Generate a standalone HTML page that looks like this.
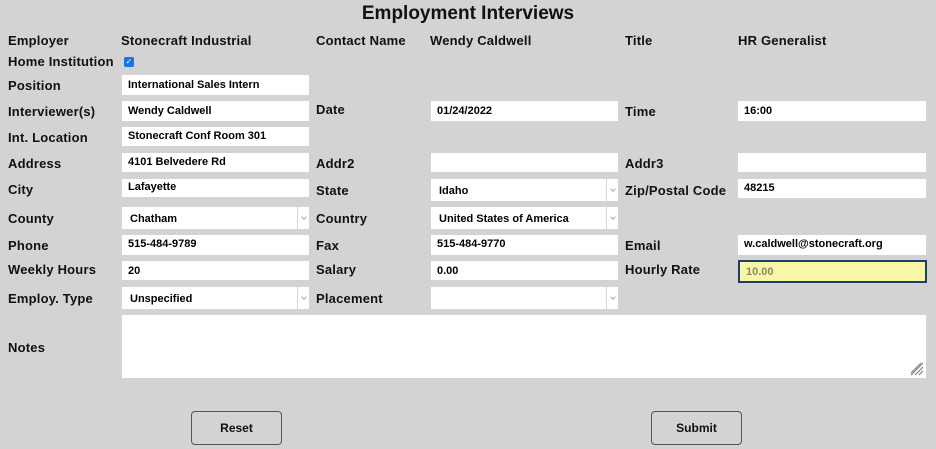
<!DOCTYPE html>
<html><head><meta charset="utf-8"><style>
body{margin:0;width:936px;height:449px;background:#d3d3d3;position:relative;overflow:hidden;font-family:"Liberation Sans",Arial,sans-serif;color:#111}
.l{position:absolute;font-size:13px;font-weight:bold;white-space:nowrap;letter-spacing:0.2px}
.i{position:absolute;background:#fff;font-size:11px;font-weight:bold;box-sizing:border-box;padding-left:6px;white-space:nowrap;color:#000}
.s{position:absolute;background:#fff;font-size:11px;font-weight:bold;box-sizing:border-box;padding-left:8px;white-space:nowrap;color:#000}
.s::after{content:"";position:absolute;right:0;top:0;bottom:0;width:11px;border-left:1px solid #d8d8d8;background:#fff}
.s::before{content:"";position:absolute;right:3px;top:50%;margin-top:-3px;width:3px;height:3px;border-right:1px solid #aaa;border-bottom:1px solid #aaa;transform:rotate(45deg);z-index:2}
.b{position:absolute;width:89px;height:32px;border:1px solid #555;border-radius:4px;box-sizing:border-box;font-size:12px;font-weight:bold;text-align:center;line-height:30px}
</style></head><body>
<div style="position:absolute;left:0;width:936px;top:3px;text-align:center;font-size:19px;font-weight:bold">Employment Interviews</div>

<div class="l" style="left:8px;top:33px">Employer</div>
<div class="l" style="left:121px;top:33px">Stonecraft Industrial</div>
<div class="l" style="left:316px;top:33px">Contact Name</div>
<div class="l" style="left:430px;top:33px">Wendy Caldwell</div>
<div class="l" style="left:625px;top:33px">Title</div>
<div class="l" style="left:738px;top:33px">HR Generalist</div>

<div class="l" style="left:8px;top:54px">Home Institution</div>
<div style="position:absolute;left:124px;top:57px;width:10px;height:10px;background:#1a73e8;border-radius:2px;color:#fff;font-size:8px;line-height:10px;text-align:center">✓</div>

<div class="l" style="left:8px;top:78px">Position</div>
<div class="i" style="left:122px;top:75px;width:187px;height:20px;line-height:20px">International Sales Intern</div>

<div class="l" style="left:8px;top:104px">Interviewer(s)</div>
<div class="i" style="left:122px;top:101px;width:187px;height:20px;line-height:20px">Wendy Caldwell</div>
<div class="l" style="left:316px;top:102px">Date</div>
<div class="i" style="left:431px;top:101px;width:187px;height:20px;line-height:20px">01/24/2022</div>
<div class="l" style="left:625px;top:104px">Time</div>
<div class="i" style="left:738px;top:101px;width:188px;height:20px;line-height:20px">16:00</div>

<div class="l" style="left:8px;top:130px">Int. Location</div>
<div class="i" style="left:122px;top:127px;width:187px;height:19px;line-height:19px">Stonecraft Conf Room 301</div>

<div class="l" style="left:8px;top:156px">Address</div>
<div class="i" style="left:122px;top:153px;width:187px;height:19px;line-height:19px">4101 Belvedere Rd</div>
<div class="l" style="left:316px;top:156px">Addr2</div>
<div class="i" style="left:431px;top:153px;width:187px;height:19px"></div>
<div class="l" style="left:625px;top:156px">Addr3</div>
<div class="i" style="left:738px;top:153px;width:188px;height:19px"></div>

<div class="l" style="left:8px;top:182px">City</div>
<div class="i" style="left:122px;top:179px;width:187px;height:18px;line-height:17px">Lafayette</div>
<div class="l" style="left:316px;top:183px">State</div>
<div class="s" style="left:431px;top:179px;width:187px;height:22px;line-height:24px">Idaho</div>
<div class="l" style="left:625px;top:183px">Zip/Postal Code</div>
<div class="i" style="left:738px;top:179px;width:188px;height:19px;line-height:18px">48215</div>

<div class="l" style="left:8px;top:211px">County</div>
<div class="s" style="left:122px;top:207px;width:187px;height:22px;line-height:24px">Chatham</div>
<div class="l" style="left:316px;top:211px">Country</div>
<div class="s" style="left:431px;top:207px;width:187px;height:22px;line-height:24px">United States of America</div>

<div class="l" style="left:8px;top:238px">Phone</div>
<div class="i" style="left:122px;top:235px;width:187px;height:20px;line-height:18px">515-484-9789</div>
<div class="l" style="left:316px;top:238px">Fax</div>
<div class="i" style="left:431px;top:235px;width:187px;height:20px;line-height:18px">515-484-9770</div>
<div class="l" style="left:625px;top:238px">Email</div>
<div class="i" style="left:738px;top:235px;width:188px;height:20px;line-height:18px">w.caldwell@stonecraft.org</div>

<div class="l" style="left:8px;top:262px">Weekly Hours</div>
<div class="i" style="left:122px;top:261px;width:187px;height:19px;line-height:20px">20</div>
<div class="l" style="left:316px;top:262px">Salary</div>
<div class="i" style="left:431px;top:261px;width:187px;height:19px;line-height:20px">0.00</div>
<div class="l" style="left:625px;top:262px">Hourly Rate</div>
<div class="i" style="left:738px;top:260px;width:189px;height:23px;line-height:20px;background:#f7f7a8;border:2px solid #1f3f66;color:#8a8a60;padding-left:6px">10.00</div>

<div class="l" style="left:8px;top:291px">Employ. Type</div>
<div class="s" style="left:122px;top:287px;width:187px;height:22px;line-height:24px">Unspecified</div>
<div class="l" style="left:316px;top:291px">Placement</div>
<div class="s" style="left:431px;top:287px;width:187px;height:22px"></div>

<div class="l" style="left:8px;top:340px">Notes</div>
<div style="position:absolute;left:122px;top:315px;width:804px;height:63px;background:#fff"></div>
<svg style="position:absolute;left:910px;top:362px" width="14" height="14"><path d="M13 1L1 13M13 5L5 13M13 9L9 13M11 1L1 11" stroke="#777" stroke-width="1"/></svg>

<div class="b" style="left:191px;top:411px;width:91px;height:34px;line-height:32px">Reset</div>
<div class="b" style="left:651px;top:411px;width:91px;height:34px;line-height:32px">Submit</div>
</body></html>
